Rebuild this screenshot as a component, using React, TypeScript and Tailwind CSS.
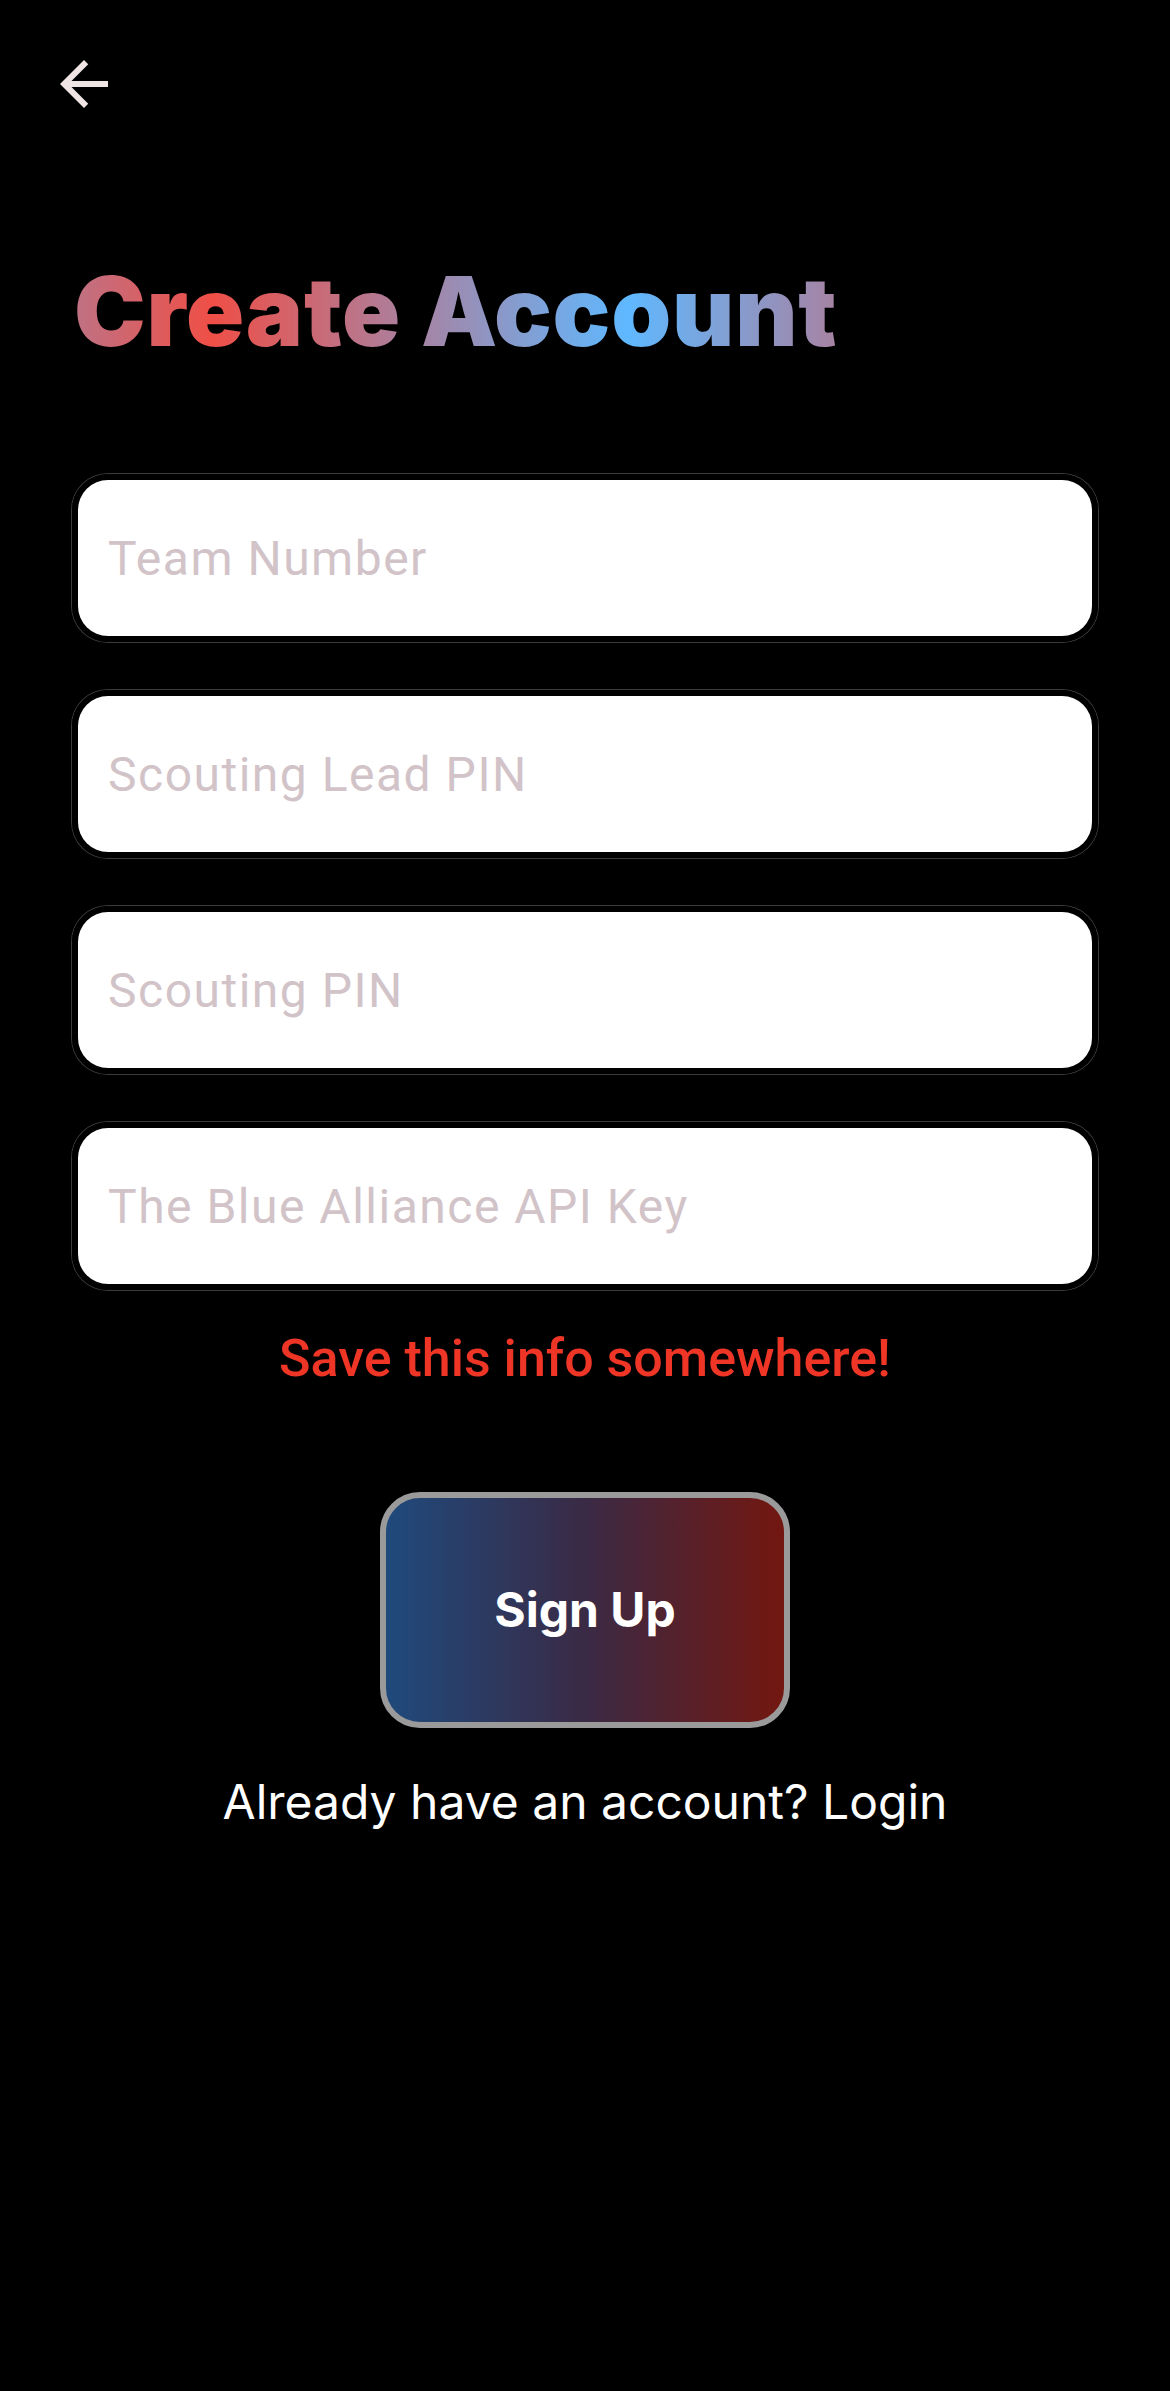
const fields = [
  "Team Number",
  "Scouting Lead PIN",
  "Scouting PIN",
  "The Blue Alliance API Key",
];

function BackArrow() {
  return (
    <svg width="72" height="72" viewBox="0 0 24 24" fill="#efe5e5">
      <path d="M20 11H7.83l5.59-5.59L12 4l-8 8 8 8 1.41-1.41L7.83 13H20v-2z" />
    </svg>
  );
}

function Field({ label }: { label: string }) {
  return (
    <div className="rounded-[36px] border-[6px] border-black ring-1 ring-[#3c3c3c]">
      <input
        placeholder={label}
        className="block w-full h-[156px] rounded-[30px] bg-white px-[30px] text-[48px] tracking-[1.5px] text-black placeholder:text-[#d1c3c8] outline-none"
        style={{ fontFamily: "Roboto, sans-serif" }}
      />
    </div>
  );
}

function App() {
  return (
    <div
      className="min-h-screen bg-black flex flex-col"
      style={{ fontFamily: "Inter, sans-serif" }}
    >
      <div className="pt-[48px] pl-[48px]">
        <BackArrow />
      </div>

      <div className="px-[72px] mt-[143px]">
        <h1 className="inline-block ml-[2px] text-[96px] leading-[96px] font-black tracking-[0.008em] text-transparent bg-clip-text bg-[linear-gradient(to_right,#bf7284_0%,#ef4f47_18%,#a783a3_45%,#5fb8ff_72.5%,#a783a3_100%)]">
          Create Account
        </h1>

        <div className="mt-[115px] flex flex-col gap-[48px]">
          {fields.map((f) => (
            <Field key={f} label={f} />
          ))}
        </div>

        <p
          className="mt-[43px] text-center text-[52px] leading-[51px] font-medium text-[#ee3526]"
          style={{ fontFamily: "Roboto, sans-serif" }}
        >
          Save this info somewhere!
        </p>

        <div className="mt-[108px] flex justify-center">
          <button className="w-[410px] h-[236px] rounded-[40px] border-[6px] border-[#9a9a9a] bg-[linear-gradient(to_right,#1f4a7c,#3a2a45_50%,#731710)] text-white text-[48px] font-bold">
            Sign Up
          </button>
        </div>

        <p className="mt-[50px] text-center text-[48px] leading-[48px] text-white">
          Already have an account? Login
        </p>
      </div>
    </div>
  );
}

export default App;
